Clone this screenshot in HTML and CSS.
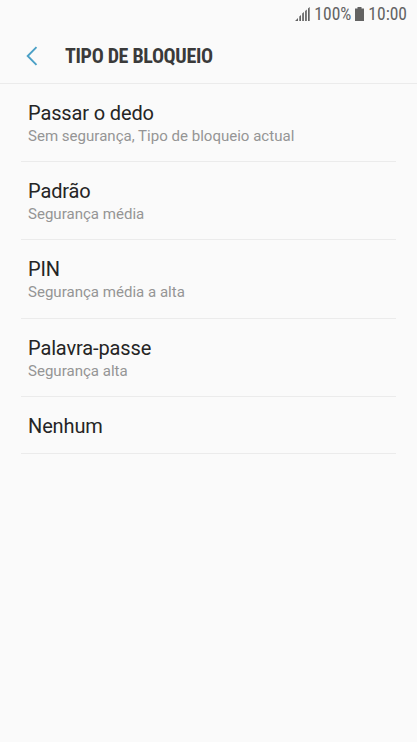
FILE: index.html
```html
<!DOCTYPE html>
<html lang="pt">
<head>
    <meta charset="UTF-8">
    <meta name="viewport" content="width=device-width, initial-scale=1.0">
    <title>Tipo de bloqueio</title>
    <link rel="stylesheet" href="styles.css">
</head>
<body>

    <div class="status-bar">
        <svg class="signal" width="15" height="14" viewBox="0 0 15 14">
            <path d="M0 14l3-3v3zM4.300 14V9.500l1.700-1.500v6zM7.200 14V6.500L8.900 5v9zM10.100 14V4l1.700-1.500V14zM13 14V1.500L14.700 0v14z"/>
        </svg>
        <span class="percent">100%</span>
        <svg class="battery" width="9" height="14" viewBox="0 0 9 14">
            <path d="M2.500 0h4v1.500H9V14H0V1.500h2.500z"/>
        </svg>
        <span class="clock">10:00</span>
    </div>

    <header class="header">
        <svg class="back" width="12" height="20" viewBox="0 0 12 20">
            <path d="M10.500 1.200L1.700 10l8.800 8.800"/>
        </svg>
        <h1>TIPO DE BLOQUEIO</h1>
    </header>

    <ul class="list">
        <li>
            <h2>Passar o dedo</h2>
            <p>Sem segurança, Tipo de bloqueio actual</p>
        </li>
        <li>
            <h2>Padrão</h2>
            <p>Segurança média</p>
        </li>
        <li>
            <h2>PIN</h2>
            <p>Segurança média a alta</p>
        </li>
        <li>
            <h2>Palavra-passe</h2>
            <p>Segurança alta</p>
        </li>
        <li class="single">
            <h2>Nenhum</h2>
        </li>
    </ul>

</body>
</html>
```
FILE: styles.css
```css
body {
    margin: 0;
    font-family: Roboto, sans-serif;
    background-color: #fafafa;
    color: #252525;
}
.status-bar {
    display: flex;
    align-items: center;
    justify-content: flex-end;
    box-sizing: border-box;
    height: 29px;
    padding: 0 10px 1px 0;
    color: #636363;
    font-family: "Roboto Condensed", Roboto, sans-serif;
    font-stretch: 75%;
    font-size: 17.500px;
}
.signal, .battery {
    fill: #636363;
}
.percent {
    margin: 0 4px;
}
.clock {
    margin-left: 4px;
}
.header {
    display: flex;
    align-items: center;
    box-sizing: border-box;
    height: 54.750px;
    padding-left: 26px;
    border-bottom: 1px solid #ebebeb;
}
.back {
    fill: none;
    stroke: #4ba0c6;
    stroke-width: 1.900;
}
h1 {
    margin: 0 0 0 27px;
    color: #3a3a3a;
    font-family: "Roboto Condensed", Roboto, sans-serif;
    font-stretch: 75%;
    font-size: 20px;
    font-weight: 700;
    letter-spacing: -0.330px;
}
.list {
    list-style: none;
    margin: 0 21px;
    padding: 0;
}
.list li {
    box-sizing: border-box;
    height: 78.250px;
    padding: 17px 7px 0;
    border-bottom: 1px solid #ebebeb;
}
.list .single {
    height: 57px;
}
h2 {
    margin: 0;
    font-size: 20px;
    font-weight: 400;
    line-height: 24px;
    letter-spacing: -0.130px;
}
p {
    margin: 0;
    color: #959595;
    font-size: 15.050px;
    line-height: 23.500px;
}
```
